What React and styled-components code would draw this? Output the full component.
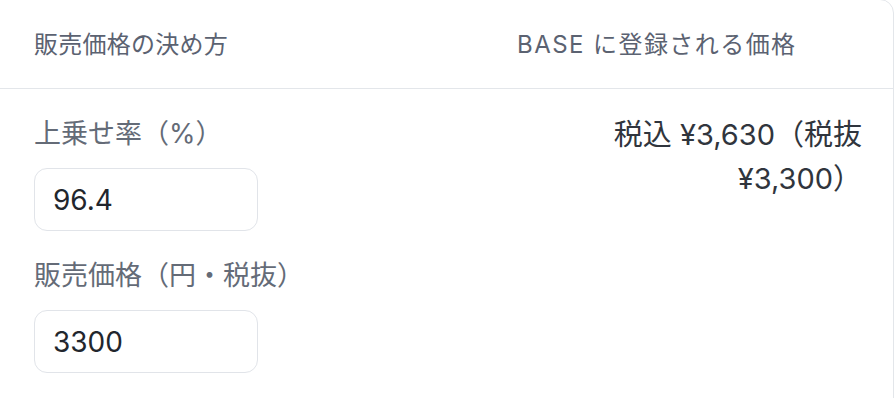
import React from "react"
import styled, { createGlobalStyle } from "styled-components"

const GlobalStyle = createGlobalStyle`
  html, body {
    margin: 0;
    padding: 0;
    background: #ffffff;
    overflow: hidden;
  }
  body {
    font-family: Inter, "Noto Sans CJK JP", sans-serif;
    -webkit-font-smoothing: antialiased;
  }
`

const PriceTable = () => {
  return (
    <Card>
      <HeaderRow>
        <HeaderCell>販売価格の決め方</HeaderCell>
        <HeaderCell $wide>BASE に登録される価格</HeaderCell>
      </HeaderRow>
      <BodyRow>
        <Fields>
          <Field>
            <Label>上乗せ率（%）</Label>
            <Input defaultValue="96.4" />
          </Field>
          <Field>
            <Label>販売価格（円・税抜）</Label>
            <Input defaultValue="3300" />
          </Field>
        </Fields>
        <PriceText>税込 ¥3,630（税抜 ¥3,300）</PriceText>
      </BodyRow>
    </Card>
  )
}

const App = () => (
  <>
    <GlobalStyle />
    <PriceTable />
  </>
)
export default App

const Card = styled.div`
  box-sizing: border-box;
  width: calc(100% + 20px);
  margin: -1px 0 0 -20px;
  border: 1px solid #e3e6ea;
  border-radius: 14px;
  background: #fff;
  min-height: 420px;
`
const HeaderRow = styled.div`
  display: grid;
  grid-template-columns: 1fr 345px;
  align-items: center;
  height: 88px;
  padding: 0 31px 0 53px;
  border-bottom: 1px solid #e3e6ea;
`
const HeaderCell = styled.div`
  font-size: 24px;
  line-height: 32px;
  color: #5b6271;
  padding-top: 2px;
  letter-spacing: ${(p) => (p.$wide ? "0.06em" : "0.01em")};
`
const BodyRow = styled.div`
  display: grid;
  grid-template-columns: 1fr 345px;
  align-items: start;
  padding: 27px 31px 0 53px;
`
const Fields = styled.div`
  display: flex;
  flex-direction: column;
  gap: 27px;
`
const Field = styled.div`
  display: flex;
  flex-direction: column;
  gap: 16px;
`
const Label = styled.div`
  font-size: 27px;
  line-height: 36px;
  color: #646b77;
`
const Input = styled.input`
  box-sizing: border-box;
  width: 224px;
  height: 63px;
  padding: 0 18px;
  border: 1.5px solid #e1e4e9;
  border-radius: 13px;
  font-family: Inter, "Noto Sans CJK JP", sans-serif;
  font-size: 28px;
  color: #22262d;
  background: #fff;
  outline: none;
`
const PriceText = styled.div`
  font-size: 29px;
  line-height: 44px;
  color: #30353d;
  text-align: right;
  margin-top: -3px;
`
